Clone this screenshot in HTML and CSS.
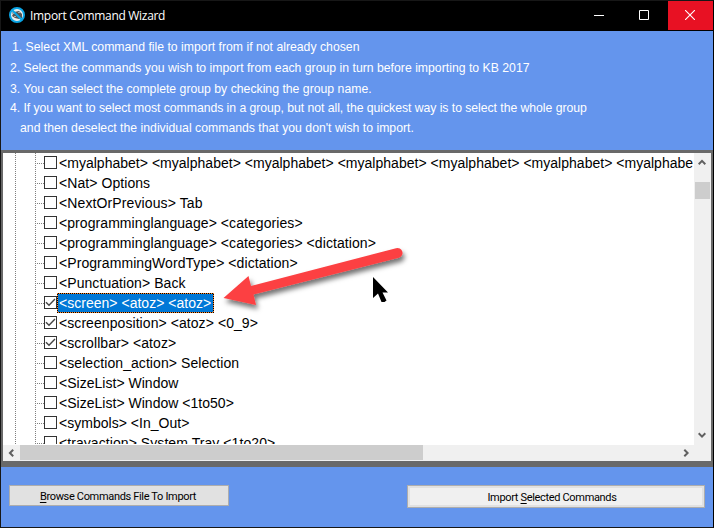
FILE: index.html
```html
<!DOCTYPE html>
<html lang="en">
<head>
<meta charset="utf-8">
<title>Import Command Wizard</title>
<link rel="stylesheet" href="styles.css">
</head>
<body>
<div class="window">
  <header class="titlebar">
    <svg class="app-icon" width="16" height="16" viewBox="0 0 16 16"><circle cx="8" cy="8" r="7" fill="#eee"/><path d="M3 9l2-4 5-1 3 3v4l-3 1-4-1z" fill="#555"/><path d="M3 5h3v2H3zM9 5h2v1H9zM5 9h2v1H5z" fill="#aaa"/><path d="M3 3l10 10" stroke="#0aa4e4" stroke-width="2"/><circle cx="8" cy="8" r="7" fill="none" stroke="#0aa4e4" stroke-width="2"/></svg>
    <h1 class="title">Import Command Wizard</h1>
    <div class="controls">
      <span class="control"><svg width="10" height="10" viewBox="0 0 10 10"><path d="M0 5.500h10" stroke="#fff"/></svg></span>
      <span class="control"><svg width="10" height="10" viewBox="0 0 10 10"><path d="M.5 .5h9v9h-9z" fill="none" stroke="#fff"/></svg></span>
      <span class="control close"><svg width="10" height="10" viewBox="0 0 10 10"><path d="M0 0l10 10M10 0L0 10" stroke="#fff" stroke-width="1.1"/></svg></span>
    </div>
  </header>
  <section class="steps">
    <p class="step s1">1. Select XML command file to import from if not already chosen</p>
    <p class="step s2">2. Select the commands you wish to import from each group in turn before importing to KB 2017</p>
    <p class="step s3">3. You can select the complete group by checking the group name.</p>
    <p class="step s4">4. If you want to select most commands in a group, but not all, the quickest way is to select the whole group</p>
    <p class="step s5">and then deselect the individual commands that you don't wish to import.</p>
  </section>
  <main class="panel">
    <div class="view">
      <ul class="tree">
        <li class="row"><i class="box"></i><span class="label snug">&lt;myalphabet&gt; &lt;myalphabet&gt; &lt;myalphabet&gt; &lt;myalphabet&gt; &lt;myalphabet&gt; &lt;myalphabet&gt; &lt;myalphabe</span></li>
        <li class="row"><i class="box"></i><span class="label">&lt;Nat&gt; Options</span></li>
        <li class="row"><i class="box"></i><span class="label wide">&lt;NextOrPrevious&gt; Tab</span></li>
        <li class="row"><i class="box"></i><span class="label">&lt;programminglanguage&gt; &lt;categories&gt;</span></li>
        <li class="row"><i class="box"></i><span class="label">&lt;programminglanguage&gt; &lt;categories&gt; &lt;dictation&gt;</span></li>
        <li class="row"><i class="box"></i><span class="label">&lt;ProgrammingWordType&gt; &lt;dictation&gt;</span></li>
        <li class="row"><i class="box"></i><span class="label">&lt;Punctuation&gt; Back</span></li>
        <li class="row"><i class="box"><svg width="11" height="11" viewBox="0 0 11 11"><path d="M1 5.300l3 3 6-6.300" fill="none" stroke="#444" stroke-width="1.4"/></svg></i><span class="label selected">&lt;screen&gt; &lt;atoz&gt; &lt;atoz&gt;</span></li>
        <li class="row"><i class="box"><svg width="11" height="11" viewBox="0 0 11 11"><path d="M1 5.300l3 3 6-6.300" fill="none" stroke="#444" stroke-width="1.4"/></svg></i><span class="label">&lt;screenposition&gt; &lt;atoz&gt; &lt;0_9&gt;</span></li>
        <li class="row"><i class="box"><svg width="11" height="11" viewBox="0 0 11 11"><path d="M1 5.300l3 3 6-6.300" fill="none" stroke="#444" stroke-width="1.4"/></svg></i><span class="label">&lt;scrollbar&gt; &lt;atoz&gt;</span></li>
        <li class="row"><i class="box"></i><span class="label">&lt;selection_action&gt; Selection</span></li>
        <li class="row"><i class="box"></i><span class="label snug">&lt;SizeList&gt; Window</span></li>
        <li class="row"><i class="box"></i><span class="label snug">&lt;SizeList&gt; Window &lt;1to50&gt;</span></li>
        <li class="row"><i class="box"></i><span class="label snug">&lt;symbols&gt; &lt;In_Out&gt;</span></li>
        <li class="row"><i class="box"></i><span class="label">&lt;trayaction&gt; System Tray &lt;1to20&gt;</span></li>
      </ul>
      <div class="vscroll">
        <svg class="up" width="8" height="7" viewBox="0 0 8 7"><path d="M.7 5.200L4 1.900l3.300 3.300" fill="none" stroke="#606060" stroke-width="2"/></svg>
        <div class="vthumb"></div>
        <svg class="down" width="8" height="7" viewBox="0 0 8 7"><path d="M.7 1.300L4 4.600l3.300-3.300" fill="none" stroke="#606060" stroke-width="2"/></svg>
      </div>
    </div>
    <div class="hscroll">
      <svg class="left" width="7" height="8" viewBox="0 0 7 8"><path d="M5.200 .7L1.900 4l3.300 3.300" fill="none" stroke="#606060" stroke-width="2"/></svg>
      <div class="hthumb"></div>
      <svg class="right" width="7" height="8" viewBox="0 0 7 8"><path d="M1.300 .7L4.600 4 1.300 7.300" fill="none" stroke="#606060" stroke-width="2"/></svg>
    </div>
  </main>
  <footer class="actions">
    <button class="button browse"><span><u>B</u>rowse Commands File To Import</span></button>
    <button class="button import"><span>Import <u>S</u>elected Commands</span></button>
  </footer>
  <svg class="pointer-arrow" width="200" height="90" viewBox="210 235 200 90">
    <defs><filter id="shadow" x="-10%" y="-20%" width="120%" height="150%"><feDropShadow dx="2" dy="4" stdDeviation="2.5" flood-color="#000" flood-opacity=".55"/></filter></defs>
    <path d="M223.500 298L248.500 276L251 286L396 248.200A5 5 0 0 1 399 257.800L253.500 294.500L256 305Z" fill="#fc4143" filter="url(#shadow)"/>
  </svg>
  <svg class="cursor" width="16" height="26" viewBox="0 0 16 26"><path d="M0 0v21l5-4.500 3.500 8.500h3l2-1.500-4-8H15z" fill="#000"/></svg>
</div>
</body>
</html>
```

FILE: styles.css
```css
* { box-sizing: border-box; }
body { margin: 0; overflow: hidden; font-family: "Liberation Sans", Arial, sans-serif; }
.window {
  position: relative;
  display: flex;
  flex-direction: column;
  width: 714px;
  height: 528px;
  border: 1px solid #171717;
  border-right-color: #000;
  background: #6495ed;
  overflow: hidden;
}
.titlebar { display: flex; height: 30px; flex: none; align-items: flex-start; background: #000; }
.app-icon { margin: 6px 0 0 8px; }
.title {
  margin: 0 0 0 5px;
  color: #fff;
  font: 400 12px/29px "Open Sans", "Noto Sans", sans-serif;
  letter-spacing: -.3px;
  white-space: nowrap;
}
.controls { display: flex; margin-left: auto; }
.control { display: flex; width: 45px; height: 29px; padding: 9px 0 0 16px; }
.close { padding-left: 17px; background: #e81123; }

.steps { height: 119px; flex: none; padding: 6px 0 0 9px; color: #fff; font-size: 12.25px; }
.step { margin: 0; height: 21px; line-height: 21px; white-space: nowrap; }
.s1 { padding-left: 2px; }
.s3 { height: 19px; }
.s4 { height: 20px; letter-spacing: -.05px; }
.s5 { padding-left: 10px; }

.panel { height: 317px; flex: none; padding: 3px 2px 6px; background: #696969; }
.view { display: flex; height: 292px; background: #fff; }
.tree {
  width: 691px;
  height: 291px;
  margin: 0;
  padding: 0 0 0 32px;
  overflow: hidden;
  list-style: none;
  background:
    repeating-linear-gradient(to bottom, #808080 0 1px, transparent 1px 2px) 12px 0 / 1px 100% no-repeat,
    repeating-linear-gradient(to bottom, #808080 0 1px, transparent 1px 2px) 32px 0 / 1px 100% no-repeat;
}
.row {
  display: flex;
  height: 20px;
  padding-left: 9px;
  align-items: center;
  background: repeating-linear-gradient(to right, #808080 0 1px, transparent 1px 2px) 0 10px / 9px 1px no-repeat;
}
.box { display: flex; width: 13px; height: 13px; flex: none; border: 1px solid #333; background: #fff; margin-top: -1px; }
.label {
  height: 20px;
  padding: 0 2px;
  color: #000;
  font-size: 14px;
  line-height: 21px;
  letter-spacing: .07px;
  white-space: nowrap;
}
.wide { letter-spacing: .11px; }
.snug { letter-spacing: .02px; }
.selected {
  width: 157px;
  color: #fff;
  letter-spacing: .02px;
  background:
    repeating-linear-gradient(to right, #ff8728 0 1px, #000 1px 2px) 0 0 / 100% 1px no-repeat,
    repeating-linear-gradient(to right, #000 0 1px, #ff8728 1px 2px) 0 100% / 100% 1px no-repeat,
    repeating-linear-gradient(to bottom, #ff8728 0 1px, #000 1px 2px) 0 0 / 1px 100% no-repeat,
    repeating-linear-gradient(to bottom, #ff8728 0 1px, #000 1px 2px) 100% 0 / 1px 100% no-repeat,
    #0078d7;
}
.vscroll { width: 17px; flex: 1; background: #f0f0f0; display: flex; flex-direction: column; }
.up { margin: 6px 0 0 4px; }
.vthumb { width: 15px; height: 17px; margin: 16px 0 0 1px; background: #cdcdcd; }
.down { margin: auto 0 6px 4px; }
.hscroll { display: flex; height: 16px; align-items: center; background: #f0f0f0; }
.left { margin-left: 5px; }
.hthumb { width: 403px; height: 15px; margin-left: 5px; align-self: flex-start; background: #cdcdcd; }
.right { margin: 0 21px 0 auto; }

.actions { display: flex; flex: 1; padding: 18px 8px 0; align-items: flex-start; justify-content: space-between; }
.button {
  height: 21px;
  padding: 1px 2px 0 0;
  border: 1px solid #adadad;
  background: #e1e1e1;
  color: #000;
  font: 11px/17px Roboto, sans-serif;
  letter-spacing: -.33px;
  white-space: nowrap;
}
.button u { text-underline-offset: 2px; }
.browse { width: 220px; }
.import { width: 298px; height: 23px; padding-right: 8px; background: #f0f0f0; box-shadow: inset 0 0 0 2px #e1e1e1; }

.pointer-arrow { position: absolute; left: 209px; top: 234px; }
.cursor { position: absolute; left: 372px; top: 276px; }
```
